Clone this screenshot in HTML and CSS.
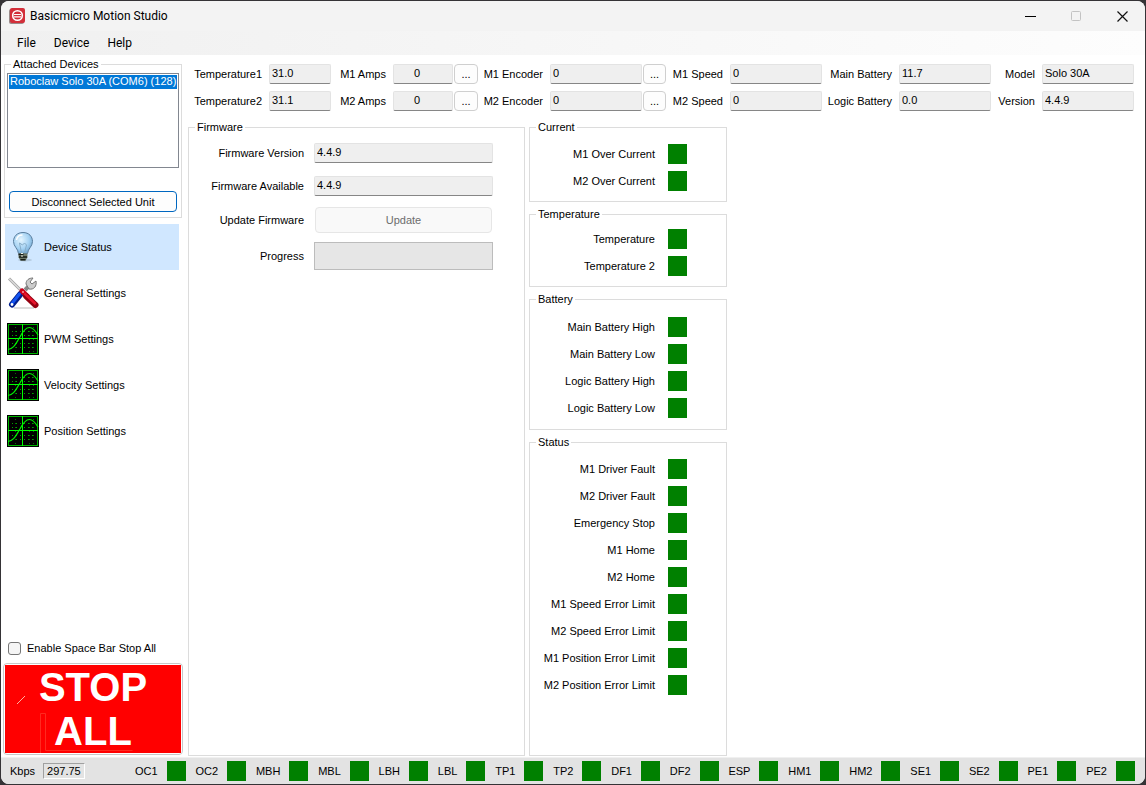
FILE: index.html
```html
<!doctype html>
<html lang="en">
<head>
    <meta charset="UTF-8">
    <meta name="viewport" content="width=device-width, initial-scale=1.0">
    <title>Basicmicro Motion Studio</title>
    <link rel="stylesheet" href="styles.css">
</head>
<body>

<!-- shared icons -->
<svg class="defs" width="0" height="0">
    <symbol id="scope" viewBox="0 0 32 32">
        <rect width="32" height="32" fill="#000"/>
        <path d="M5 8.5h24M5 12.5h24M5 20.5h24M5 24.5h24" stroke="#00a000" stroke-dasharray="1 3"/>
        <path d="M8.5 4v26M22.5 4v26M26.5 4v26" stroke="#007000" stroke-dasharray="1 3"/>
        <rect x="1.5" y="1.5" width="29" height="29" fill="none" stroke="#00b400"/>
        <path d="M15.5 1v30M1 15.5h30" stroke="#00ff00"/>
        <path d="M1 26.5C7 26 9 20 13 14C16 8 19 4.5 22.5 4.5C26 4.5 28 7 31 12" fill="none" stroke="#00f000" stroke-width="1.2"/>
    </symbol>
</svg>

<div class="window">
    <header class="titlebar">
        <svg class="app_icon" viewBox="0 0 16 16">
            <rect x="0" y="1" width="15" height="15" rx="2" fill="#9a8a8a"/>
            <rect x="1" y="0" width="15" height="15" rx="2" fill="#d32f3a"/>
            <circle cx="8.5" cy="7.5" r="4.8" fill="none" stroke="#fff" stroke-width="1.6"/>
            <path d="M5 6.5h7M5 8.8h7" stroke="#fff" stroke-width="1.2"/>
        </svg>
        <h1 class="title">Basicmicro Motion Studio</h1>
        <button class="win_btn" aria-label="Minimize">
            <svg viewBox="0 0 11 11"><path d="M0 5.5h11" stroke="#000"/></svg>
        </button>
        <button class="win_btn" aria-label="Maximize" disabled>
            <svg viewBox="0 0 11 11"><rect x="0.5" y="0.5" width="9" height="9" rx="1" fill="none" stroke="#c3c3c3"/></svg>
        </button>
        <button class="win_btn" aria-label="Close">
            <svg viewBox="0 0 11 11"><path d="M.5.5l10 10M10.5.5l-10 10" stroke="#111" stroke-width="1.2"/></svg>
        </button>
    </header>

    <nav class="menubar">
        <button>File</button>
        <button>Device</button>
        <button>Help</button>
    </nav>

    <div class="body">
        <aside class="sidebar">
            <fieldset class="group devices">
                <legend>Attached Devices</legend>
                <select class="device_list" size="6" aria-label="Attached Devices">
                    <option selected>Roboclaw Solo 30A (COM6) (128)</option>
                </select>
                <button class="disconnect">Disconnect Selected Unit</button>
            </fieldset>

            <nav class="pages">
                <a href="#status" class="active">
                    <svg viewBox="0 0 32 32">
                        <defs>
                            <radialGradient id="glass" cx=".4" cy=".35" r=".7">
                                <stop offset="0" stop-color="#e4f5ff"/>
                                <stop offset=".6" stop-color="#a5d2f3"/>
                                <stop offset="1" stop-color="#6fa3cd"/>
                            </radialGradient>
                        </defs>
                        <ellipse cx="18" cy="29" rx="7" ry="1.5" fill="#b5cbe0"/>
                        <path d="M16 1.5c-6 0-9.500 4-9.500 9 0 5 4.500 7 5 12h9c.5-5 5-7 5-12 0-5-3.500-9-9.500-9z" fill="url(#glass)" stroke="#5b7f9f"/>
                        <path d="M9.500 9c.5-3 3-5 6-5" fill="none" stroke="#fff" stroke-width="1.5"/>
                        <path d="M14.500 22l-2-10 3 2 2-2 2 2-2 8" fill="none" stroke="#86adc9"/>
                        <path d="M11.500 22.500h9v4l-2 3h-5l-2-3z" fill="#6f7a6a"/>
                        <path d="M11.500 23.500h5M12 26h8M13.500 28.800h5" stroke="#171d17" stroke-width="1.5"/>
                        <path d="M14 22.500h2M14 25h2" stroke="#eef3e8"/>
                    </svg>
                    Device Status
                </a>
                <a href="#general">
                    <svg viewBox="0 0 32 32">
                        <path d="M7 31h20" stroke="#bbb"/>
                        <path d="M2 1.5l13 13" stroke="#aaa" stroke-width="3"/>
                        <path d="M2 1.5l13 13" stroke="#fff"/>
                        <path d="M18 13l5-5" stroke="#888" stroke-width="4"/>
                        <path d="M19 7c0-4 3-6 7-6l-3 4 2 2 4-3c1 5-2 9-7 8z" fill="#ccc" stroke="#777"/>
                        <path d="M17 13l-4 4" stroke="#0030d0" stroke-width="4"/>
                        <path d="M13.500 17L5 27.500" stroke="#001e8c" stroke-width="6" stroke-linecap="round"/>
                        <path d="M12.500 17L5 26.500" stroke="#1454f0" stroke-width="3" stroke-linecap="round"/>
                        <circle cx="5" cy="27.500" r="1.4" fill="#fff"/>
                        <path d="M15 14l5 5" stroke="#d00018" stroke-width="5" stroke-linecap="round"/>
                        <path d="M19 19l9.500 9" stroke="#940010" stroke-width="6" stroke-linecap="round"/>
                        <path d="M18 17l10 9.500" stroke="#e8142c" stroke-width="2.5" stroke-linecap="round"/>
                        <circle cx="16" cy="15" r="1" fill="#ff9aa4"/>
                    </svg>
                    General Settings
                </a>
                <a href="#pwm"><svg><use href="#scope"/></svg>PWM Settings</a>
                <a href="#velocity"><svg><use href="#scope"/></svg>Velocity Settings</a>
                <a href="#position"><svg><use href="#scope"/></svg>Position Settings</a>
            </nav>

            <label class="space_stop"><input type="checkbox"> Enable Space Bar Stop All</label>
            <button class="stop_all">
                <svg viewBox="0 0 176 88">
                    <path d="M12 39l8-8" stroke="#ffb0a0"/>
                    <path d="M35.5 88V48.5h5V85.5h87" fill="none" stroke="#ff2a20"/>
                </svg>
                <span>STOP ALL</span>
            </button>
        </aside>

        <main class="main">
            <section class="readouts">
                <label for="temp1">Temperature1</label><input id="temp1" value="31.0" readonly>
                <label for="amps1">M1 Amps</label><input id="amps1" class="center" value="0" readonly>
                <button aria-label="M1 amps options">...</button>
                <label for="enc1">M1 Encoder</label><input id="enc1" value="0" readonly>
                <button aria-label="M1 encoder options">...</button>
                <label for="speed1">M1 Speed</label><input id="speed1" value="0" readonly>
                <label for="mainbat">Main Battery</label><input id="mainbat" value="11.7" readonly>
                <label for="model">Model</label><input id="model" value="Solo 30A" readonly>

                <label for="temp2">Temperature2</label><input id="temp2" value="31.1" readonly>
                <label for="amps2">M2 Amps</label><input id="amps2" class="center" value="0" readonly>
                <button aria-label="M2 amps options">...</button>
                <label for="enc2">M2 Encoder</label><input id="enc2" value="0" readonly>
                <button aria-label="M2 encoder options">...</button>
                <label for="speed2">M2 Speed</label><input id="speed2" value="0" readonly>
                <label for="logicbat">Logic Battery</label><input id="logicbat" value="0.0" readonly>
                <label for="version">Version</label><input id="version" value="4.4.9" readonly>
            </section>

            <div class="panels">
                <fieldset class="group firmware">
                    <legend>Firmware</legend>
                    <div class="firmware_form">
                        <label for="fwver">Firmware Version</label><input id="fwver" value="4.4.9" readonly>
                        <label for="fwavail">Firmware Available</label><input id="fwavail" value="4.4.9" readonly>
                        <label for="fwupdate">Update Firmware</label><button id="fwupdate" disabled>Update</button>
                        <span>Progress</span><div class="progress" role="progressbar" aria-label="Progress"></div>
                    </div>
                </fieldset>

                <div class="flags">
                    <fieldset class="group current">
                        <legend>Current</legend>
                        <div class="flag">M1 Over Current<i class="led"></i></div>
                        <div class="flag">M2 Over Current<i class="led"></i></div>
                    </fieldset>
                    <fieldset class="group">
                        <legend>Temperature</legend>
                        <div class="flag">Temperature<i class="led"></i></div>
                        <div class="flag">Temperature 2<i class="led"></i></div>
                    </fieldset>
                    <fieldset class="group battery">
                        <legend>Battery</legend>
                        <div class="flag">Main Battery High<i class="led"></i></div>
                        <div class="flag">Main Battery Low<i class="led"></i></div>
                        <div class="flag">Logic Battery High<i class="led"></i></div>
                        <div class="flag">Logic Battery Low<i class="led"></i></div>
                    </fieldset>
                    <fieldset class="group status">
                        <legend>Status</legend>
                        <div class="flag">M1 Driver Fault<i class="led"></i></div>
                        <div class="flag">M2 Driver Fault<i class="led"></i></div>
                        <div class="flag">Emergency Stop<i class="led"></i></div>
                        <div class="flag">M1 Home<i class="led"></i></div>
                        <div class="flag">M2 Home<i class="led"></i></div>
                        <div class="flag">M1 Speed Error Limit<i class="led"></i></div>
                        <div class="flag">M2 Speed Error Limit<i class="led"></i></div>
                        <div class="flag">M1 Position Error Limit<i class="led"></i></div>
                        <div class="flag">M2 Position Error Limit<i class="led"></i></div>
                    </fieldset>
                </div>
            </div>
        </main>
    </div>

    <footer class="statusbar">
        <div class="rate">Kbps <output>297.75</output></div>
        <div class="lamps">
            <span>OC1<i class="led"></i></span>
            <span>OC2<i class="led"></i></span>
            <span>MBH<i class="led"></i></span>
            <span>MBL<i class="led"></i></span>
            <span>LBH<i class="led"></i></span>
            <span>LBL<i class="led"></i></span>
            <span>TP1<i class="led"></i></span>
            <span>TP2<i class="led"></i></span>
            <span>DF1<i class="led"></i></span>
            <span>DF2<i class="led"></i></span>
            <span>ESP<i class="led"></i></span>
            <span>HM1<i class="led"></i></span>
            <span>HM2<i class="led"></i></span>
            <span>SE1<i class="led"></i></span>
            <span>SE2<i class="led"></i></span>
            <span>PE1<i class="led"></i></span>
            <span>PE2<i class="led"></i></span>
        </div>
    </footer>
</div>

</body>
</html>
```
FILE: styles.css
```css
* {
    box-sizing: border-box;
}

body {
    margin: 0;
    padding: 1px;
    min-height: 100vh;
    display: flex;
    background: #353336;
    color: #000;
    font: 11px/14px "Liberation Sans", Arial, sans-serif;
}

button, input, select {
    margin: 0;
    font: inherit;
    color: inherit;
}

.defs {
    position: absolute;
}

.window {
    flex: 1;
    min-width: 0;
    display: flex;
    flex-direction: column;
    background: #fff;
    border-radius: 8px;
    overflow: hidden;
}

/* title bar and menu */
.titlebar {
    display: flex;
    align-items: center;
    height: 30px;
    padding-left: 8px;
    background: #f3f3f3;
}

.app_icon {
    width: 16px;
    height: 16px;
}

.title {
    flex: 1;
    margin: 0 0 0 5px;
    font: 12px/16px Roboto, "Segoe UI", sans-serif;
}

.win_btn {
    width: 46px;
    height: 30px;
    padding: 0;
    border: 0;
    background: none;
}

.win_btn svg {
    display: block;
    width: 11px;
    height: 11px;
    margin: 0 auto;
}

.menubar {
    display: flex;
    height: 24px;
    padding-left: 7px;
    background: linear-gradient(90deg, #f0f0f0, #fdfdfd);
}

.menubar button {
    padding: 0 9px;
    border: 0;
    background: none;
    font: 12px/16px Roboto, "Segoe UI", sans-serif;
}

.body {
    flex: 1;
    display: flex;
}

/* group boxes */
.group {
    min-width: 0;
    margin: 0;
    padding: 8px 39px 10px 6px;
    border: 1px solid #dcdcdc;
}

.group legend {
    padding: 0 2px;
}

/* left column */
.sidebar {
    width: 187px;
    padding: 2px 4px 2px 2px;
    display: flex;
    flex-direction: column;
}

.devices {
    width: 178px;
    margin-left: 1px;
    padding: 2px 2px 5px;
    display: flex;
    flex-direction: column;
}

.devices legend {
    margin-left: 4px;
}

.device_list {
    height: 95px;
    padding: 1px;
    border: 1px solid #828790;
    border-radius: 0;
    background: #fff;
    outline: 0;
    overflow: hidden;
}

.device_list option {
    min-height: 14px;
    padding: 0 1px;
    line-height: 14px;
}

.device_list option:checked {
    background: #0078d7 linear-gradient(#0078d7, #0078d7);
    color: #fff;
}

.disconnect {
    height: 21px;
    margin: 23px 2px 0;
    padding: 0;
    border: 1px solid #0067c0;
    border-radius: 4px;
    background: #fdfdfd;
}

.pages {
    margin: 6px 0 auto 2px;
    width: 174px;
}

.pages a {
    display: flex;
    align-items: center;
    gap: 5px;
    height: 46px;
    padding-left: 2px;
    color: #000;
    text-decoration: none;
}

.pages a.active {
    background: #d0e7ff;
}

.pages svg {
    width: 32px;
    height: 32px;
}

.space_stop {
    display: flex;
    align-items: center;
    gap: 6px;
    margin: 0 0 8px 5px;
}

.space_stop input {
    appearance: none;
    width: 13px;
    height: 13px;
    border: 1px solid #767676;
    border-radius: 3px;
    background: #f5f5f5;
}

.stop_all {
    position: relative;
    width: 180px;
    padding: 1px;
    border: 1px solid #c8c8c8;
    border-radius: 4px;
    background: #fff;
    color: #fff;
    font-size: 40px;
    line-height: 44px;
    font-weight: bold;
}

.stop_all span {
    display: block;
    padding: 0 30px;
    background: #f00;
}

/* scratches over the red face */
.stop_all svg {
    position: absolute;
    top: 1px;
    left: 1px;
    width: 176px;
    height: 88px;
}

/* live values */
.main {
    flex: 1;
    min-width: 0;
    display: flex;
    flex-direction: column;
}

.readouts {
    display: grid;
    grid-template-columns: 81px 62fr 62px 60fr 25px 72px 92fr 24px 64px 92fr 77px 92fr 51px 92fr;
    grid-auto-rows: 20px;
    row-gap: 7px;
    align-items: center;
    padding: 9px 11px 0 0;
}

.readouts label {
    padding-right: 7px;
    text-align: right;
    white-space: nowrap;
}

.main input {
    width: 100%;
    min-width: 0;
    height: 20px;
    padding: 0 2px 2px;
    border: 1px solid #e3e3e3;
    border-bottom-color: #868686;
    border-radius: 2px;
    background: #efefef;
    outline: 0;
}

.main input.center {
    padding-right: 14px;
    text-align: center;
}

.readouts button {
    height: 20px;
    margin-left: 1px;
    padding: 0;
    border: 1px solid #cfcfcf;
    border-radius: 4px;
    background: #fdfdfd;
}

.panels {
    flex: 1;
    display: flex;
    gap: 4px;
    padding: 9px 0 1px;
}

.firmware {
    width: 337px;
    padding-top: 7px;
    padding-right: 31px;
}

.firmware_form {
    display: grid;
    grid-template-columns: 1fr 179px;
    grid-template-rows: 23px 23px 25px 28px;
    gap: 10px;
    align-items: center;
    text-align: right;
}

.firmware_form button {
    height: 26px;
    margin: 0 1px;
    border: 1px solid #e6e6e6;
    border-radius: 4px;
    background: #f9f9f9;
    color: #6d6d6d;
}

.progress {
    height: 28px;
    border: 1px solid #bcbcbc;
    background: #e6e6e6;
}

.flags {
    width: 198px;
    display: flex;
    flex-direction: column;
    gap: 5px;
}

.flag {
    display: flex;
    align-items: center;
    justify-content: flex-end;
    gap: 13px;
}

.flag + .flag {
    margin-top: 7px;
}

.led {
    flex: none;
    width: 19px;
    height: 20px;
    background: #008000;
}

.current {
    padding-top: 10px;
}

.battery {
    padding-top: 11px;
    padding-bottom: 11px;
}

.status {
    flex: 1;
    padding-top: 10px;
}

/* bottom bar */
.statusbar {
    display: flex;
    align-items: center;
    height: 27px;
    padding: 0 10px 0 9px;
    border-top: 1px solid #f0f0f0;
    background: #e3e3e3;
}

.rate {
    display: flex;
    align-items: center;
    gap: 8px;
    width: 125px;
}

.rate output {
    padding: 0 3px;
    border: 1px solid #a0a0a0;
    border-right-color: #fff;
    border-bottom-color: #fff;
}

.lamps {
    flex: 1;
    display: flex;
    justify-content: space-between;
}

.lamps span {
    display: flex;
    align-items: center;
    gap: 9px;
}
```
